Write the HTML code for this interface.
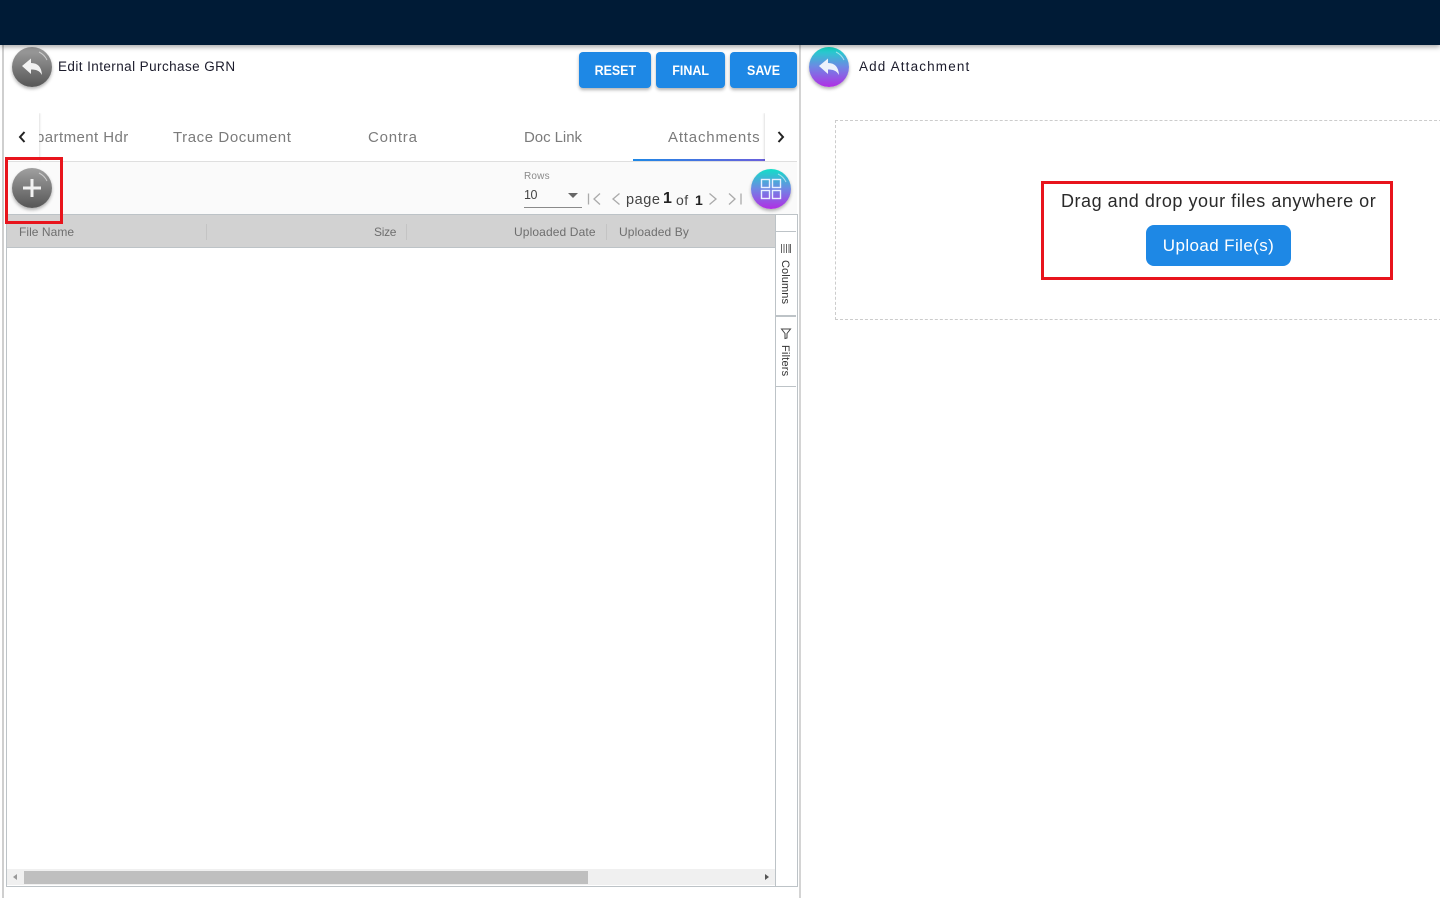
<!DOCTYPE html>
<html><head><meta charset="utf-8"><style>
html,body{margin:0;padding:0;width:1440px;height:900px;overflow:hidden;background:#fff;font-family:"Liberation Sans",sans-serif}
.a{position:absolute;white-space:nowrap}
.btn{background:#1e88e5;color:#fff;font-weight:700;font-size:14px;border-radius:4px;text-align:center;height:36px;line-height:37px;top:52px;box-shadow:0 2px 3px rgba(0,0,0,.3)}
.btn span{display:inline-block;transform:scaleX(.89)}
.circ{border-radius:50%;width:40px;height:40px;box-shadow:0 2px 3px rgba(0,0,0,.3)}
.gray{background:linear-gradient(180deg,#a0a0a0,#565656)}
.col{background:linear-gradient(180deg,#12dfc8,#6f87e4 50%,#b12ee4)}
.tab{font-size:15px;color:#7b7b7b;top:129px}
.th{font-size:12px;color:#6e6e6e;top:225px}
.sep{width:1px;height:16px;background:#c4c4c4;top:224px}
.v{writing-mode:vertical-rl;font-size:11px;color:#333;letter-spacing:.2px}
</style></head><body>
<div class="a" style="left:0;top:0;width:1440px;height:45px;background:#001b36;box-shadow:0 2px 5px rgba(0,0,0,.35);z-index:5"></div>
<div class="a" style="left:2px;top:45px;width:2px;height:853px;background:#cfcfcf"></div>
<div class="a" style="left:799px;top:45px;width:2px;height:853px;background:#d4d4d4"></div>

<div class="a circ gray" style="left:12px;top:47px"></div>
<svg class="a" style="left:12px;top:47px" width="40" height="40" fill="none"><path d="M27 5 A17 17 0 0 1 35 13" stroke="#fff" stroke-opacity=".55" stroke-width="1"/></svg>
<svg class="a" style="left:21px;top:57px" width="22" height="20" viewBox="0 0 22 20"><path d="M1 9 L10 1.500 V6 C17 6 20.500 10 21 18 C18.500 13.500 15 12.500 10 12.500 V17 Z" fill="#f2f2f2"/></svg>
<div class="a" style="left:58px;top:59px;font-size:13.500px;color:#1c1c2c;letter-spacing:.42px">Edit Internal Purchase GRN</div>

<div class="a btn" style="left:579px;width:72px"><span>RESET</span></div>
<div class="a btn" style="left:656px;width:69px"><span>FINAL</span></div>
<div class="a btn" style="left:730px;width:67px"><span>SAVE</span></div>

<div class="a tab" style="left:36px;letter-spacing:.43px">partment Hdr</div>
<div class="a tab" style="left:173px;letter-spacing:.58px">Trace Document</div>
<div class="a tab" style="left:368px;letter-spacing:.78px">Contra</div>
<div class="a tab" style="left:524px;letter-spacing:-.05px">Doc Link</div>
<div class="a tab" style="left:668px;letter-spacing:.82px">Attachments</div>
<div class="a" style="left:633px;top:159px;width:132px;height:2px;background:linear-gradient(90deg,#1e88e5,#6a5fdc)"></div>
<div class="a" style="left:4px;top:113px;width:35px;height:48px;background:#fff;box-shadow:1px 0 2px rgba(0,0,0,.12);clip-path:inset(0 -4px 0 0)"></div>
<div class="a" style="left:765px;top:113px;width:32px;height:48px;background:#fff;box-shadow:-1px 0 2px rgba(0,0,0,.12);clip-path:inset(0 0 0 -4px)"></div>
<svg class="a" style="left:17px;top:130px" width="10" height="14"><path d="M7.500 2 L3 7 L7.500 12" fill="none" stroke="#222" stroke-width="2"/></svg>
<svg class="a" style="left:776px;top:130px" width="10" height="14"><path d="M2.500 2 L7 7 L2.500 12" fill="none" stroke="#222" stroke-width="2"/></svg>

<div class="a" style="left:6px;top:161px;width:791px;height:53px;background:#fafafa;border-top:1px solid #dfdfdf"></div>
<div class="a circ gray" style="left:12px;top:168px"></div>
<svg class="a" style="left:12px;top:168px" width="40" height="40" fill="none"><path d="M27 5 A17 17 0 0 1 35 13" stroke="#fff" stroke-opacity=".55" stroke-width="1"/></svg>
<svg class="a" style="left:21px;top:177px" width="22" height="22"><path d="M11 2 V20 M2 11 H20" stroke="#f2f2f2" stroke-width="3"/></svg>
<div class="a" style="left:5px;top:157px;width:52px;height:61px;border:3px solid #e8141c;z-index:3"></div>

<div class="a" style="left:524px;top:171px;font-size:10px;color:#8a8a8a;letter-spacing:.2px">Rows</div>
<div class="a" style="left:524px;top:188px;font-size:12.500px;color:#444;letter-spacing:-.5px">10</div>
<div class="a" style="left:524px;top:207px;width:58px;height:1px;background:#8a8a8a"></div>
<div class="a" style="left:568px;top:193px;width:0;height:0;border-left:5px solid transparent;border-right:5px solid transparent;border-top:5px solid #666"></div>
<svg class="a" style="left:586px;top:192px" width="160" height="14" fill="none" stroke="#aaa" stroke-width="1.300">
<path d="M2.500 1.500 V12.500 M14 1.500 L8 7 L14 12.500"/><path d="M33.500 1.500 L27 7 L33.500 12.500"/>
<path d="M123.500 1.500 L130 7 L123.500 12.500"/><path d="M143 1.500 L149 7 L143 12.500 M155 1.500 V12.500"/></svg>
<div class="a" style="left:626px;top:192px;font-size:14.500px;color:#444;letter-spacing:.55px">page</div>
<div class="a" style="left:663px;top:190px;font-size:16px;color:#222;font-weight:700">1</div>
<div class="a" style="left:676px;top:192px;font-size:14px;color:#444;letter-spacing:.5px">of</div>
<div class="a" style="left:695px;top:192px;font-size:14px;color:#222;font-weight:700">1</div>
<div class="a circ col" style="left:751px;top:169px"></div>
<svg class="a" style="left:751px;top:169px" width="40" height="40" fill="none"><path d="M27 5 A17 17 0 0 1 35 13" stroke="#fff" stroke-opacity=".55" stroke-width="1"/></svg>
<svg class="a" style="left:760px;top:178px" width="22" height="22" fill="none" stroke="#e8f0ff" stroke-width="1.400"><rect x="1.500" y="1.500" width="8" height="8"/><rect x="12.500" y="1.500" width="8" height="8"/><rect x="1.500" y="12.500" width="8" height="8"/><rect x="12.500" y="12.500" width="8" height="8"/></svg>

<div class="a" style="left:6px;top:214px;width:790px;height:671px;border:1px solid #bdc3c7"></div>
<div class="a" style="left:7px;top:215px;width:768px;height:32px;background:#d2d2d2;border-bottom:1px solid #bdc3c7"></div>
<div class="a th" style="left:19px;letter-spacing:.05px">File Name</div>
<div class="a sep" style="left:206px"></div>
<div class="a th" style="left:374px;letter-spacing:-.3px">Size</div>
<div class="a sep" style="left:406px"></div>
<div class="a th" style="left:514px;letter-spacing:.12px">Uploaded Date</div>
<div class="a sep" style="left:606px"></div>
<div class="a th" style="left:619px;letter-spacing:.12px">Uploaded By</div>

<div class="a" style="left:775px;top:215px;width:1px;height:671px;background:#bdc3c7"></div>
<div class="a" style="left:776px;top:231px;width:20px;height:1px;background:#bdc3c7"></div>
<div class="a" style="left:776px;top:315px;width:20px;height:2px;background:#bdc3c7"></div>
<div class="a" style="left:776px;top:386px;width:20px;height:1px;background:#bdc3c7"></div>
<svg class="a" style="left:780px;top:243px" width="12" height="11" stroke="#666"><path d="M1.500 1 V10 M4 1 V10 M6.500 1 V10 M9 1 V10 M10.500 1 V10" stroke-width="1"/></svg>
<div class="a v" style="left:779px;top:260px;letter-spacing:.1px">Columns</div>
<svg class="a" style="left:780px;top:328px" width="12" height="12"><path d="M1.500 1 H10.500 L7 5.500 V10 L5 10.500 V5.500 Z" fill="none" stroke="#444"/></svg>
<div class="a v" style="left:779px;top:345px">Filters</div>

<div class="a" style="left:7px;top:869px;width:768px;height:16px;background:#f0f0f0"></div>
<div class="a" style="left:24px;top:871px;width:564px;height:13px;background:#bfbfbf"></div>
<div class="a" style="left:13px;top:874px;width:0;height:0;border-top:3.500px solid transparent;border-bottom:3.500px solid transparent;border-right:4px solid #999"></div>
<div class="a" style="left:765px;top:874px;width:0;height:0;border-top:3.500px solid transparent;border-bottom:3.500px solid transparent;border-left:4px solid #555"></div>

<div class="a circ col" style="left:809px;top:47px"></div>
<svg class="a" style="left:809px;top:47px" width="40" height="40" fill="none"><path d="M27 5 A17 17 0 0 1 35 13" stroke="#fff" stroke-opacity=".55" stroke-width="1"/></svg>
<svg class="a" style="left:818px;top:57px" width="22" height="20" viewBox="0 0 22 20"><path d="M1 9 L10 1.500 V6 C17 6 20.500 10 21 18 C18.500 13.500 15 12.500 10 12.500 V17 Z" fill="#eef2fb"/></svg>
<div class="a" style="left:859px;top:59px;font-size:13.500px;color:#1c1c2c;letter-spacing:1.15px">Add Attachment</div>

<div class="a" style="left:835px;top:120px;width:620px;height:198px;border:1px dashed #ccc"></div>
<div class="a" style="left:1041px;top:181px;width:346px;height:93px;border:3px solid #e8141c"></div>
<div class="a" style="left:1061px;top:191px;font-size:18px;color:#2a2a2a;letter-spacing:.53px">Drag and drop your files anywhere or</div>
<div class="a" style="left:1146px;top:225px;width:145px;height:41px;line-height:41px;background:#1e88e5;border-radius:8px;color:#fff;font-size:17px;text-align:center;letter-spacing:.4px">Upload File(s)</div>
</body></html>
